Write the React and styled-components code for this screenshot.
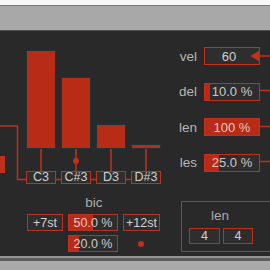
import React from 'react';
import styled, { createGlobalStyle } from 'styled-components';

const RED = '#c0311d';
const BAR = '#b72b17';
const PANEL = '#292929';
const BOX = '#2e2e2e';

const GlobalStyle = createGlobalStyle`
  html, body {
    margin: 0;
    padding: 0;
    width: 270px;
    height: 270px;
    overflow: hidden;
    background: #f6f6f6;
  }
  * {
    box-sizing: border-box;
  }
`;

const bars = [
  { note: 'C3', height: 99 },
  { note: 'C#3', height: 72 },
  { note: 'D3', height: 25 },
  { note: 'D#3', height: 5 },
];

const params = [
  { label: 'vel', value: '60', kind: 'number' },
  { label: 'del', value: '10.0 %', fill: 10 },
  { label: 'len', value: '100 %', fill: 100 },
  { label: 'les', value: '25.0 %', fill: 25 },
];

const App = () => {
  return (
    <Page>
      <GlobalStyle />
      <TopStrip />
      <Toolbar />
      <Panel>
        <Wires width="270" height="225" viewBox="0 0 270 225">
          <polyline points="0,95 17.5,95 17.5,148.5 26,148.5" />
          <line x1="56" y1="148.5" x2="61" y2="148.5" />
          <line x1="91" y1="148.5" x2="96" y2="148.5" />
          <line x1="126" y1="148.5" x2="131" y2="148.5" />
          {[41, 76, 111, 146].map((x) => (
            <line key={x} x1={x} y1="118" x2={x} y2="140" />
          ))}
          <circle cx="76" cy="130" r="3" />
          {[25, 59.5, 95.5, 130.5].map((y) => (
            <line key={y} x1="260" y1={y} x2="270" y2={y} />
          ))}
          <rect className="solid" x="0" y="125" width="5" height="17" />
        </Wires>

        <LeftArea>
          <Chart>
            {bars.map((b) => (
              <Bar key={b.note} $height={b.height} />
            ))}
          </Chart>
          <NoteRow>
            {bars.map((b) => (
              <NoteBox key={b.note}>{b.note}</NoteBox>
            ))}
          </NoteRow>
          <GroupLabel>bic</GroupLabel>
          <ControlRow>
            <Box $width={36}>+7st</Box>
            <Slider $width={50} $fill={50}>50.0 %</Slider>
            <Box $width={37}>+12st</Box>
          </ControlRow>
          <ControlRow $indent={41}>
            <Slider $width={50} $fill={20}>20.0 %</Slider>
            <Led />
          </ControlRow>
        </LeftArea>

        <RightArea>
          <ParamList>
            {params.map((p) => (
              <ParamRow key={p.label}>
                <ParamLabel>{p.label}</ParamLabel>
                {p.kind === 'number' ? (
                  <NumberBox>{p.value}</NumberBox>
                ) : (
                  <ParamSlider $fill={p.fill}>{p.value}</ParamSlider>
                )}
              </ParamRow>
            ))}
          </ParamList>
          <LenGroup>
            <GroupLabel as="div">len</GroupLabel>
            <LenRow>
              <Box $width={31} $height={16}>4</Box>
              <Box $width={30} $height={16}>4</Box>
            </LenRow>
          </LenGroup>
        </RightArea>
      </Panel>
      <Footer />
    </Page>
  );
};

export default App;

const Page = styled.div`
  display: flex;
  flex-direction: column;
  width: 270px;
  height: 270px;
  font-family: 'Liberation Sans', Arial, sans-serif;
`;

const TopStrip = styled.div`
  height: 5px;
  background: #f7f7f7;
`;

const Toolbar = styled.div`
  height: 26px;
  background: #a8a8a8;
  border-top: 1px solid #777777;
  border-bottom: 1px solid #4c4c4c;
`;

const Panel = styled.div`
  position: relative;
  display: flex;
  height: 225px;
  background: ${PANEL};
`;

const Footer = styled.div`
  flex: 1;
  background: #a9a9a9;
  border-top: 2px solid #959595;
  box-shadow: inset 0 3px 0 #5e5e5e;
`;

const Wires = styled.svg`
  position: absolute;
  left: 0;
  top: 0;
  pointer-events: none;
  stroke: ${RED};
  stroke-width: 1.5;
  fill: none;
  circle,
  .solid {
    fill: ${RED};
    stroke: none;
  }
`;

const LeftArea = styled.div`
  position: relative;
  display: flex;
  flex-direction: column;
  width: 172px;
`;

const Chart = styled.div`
  display: flex;
  align-items: flex-end;
  gap: 5px;
  height: 118px;
  padding-left: 26px;
`;

const Bar = styled.div`
  width: 30px;
  height: ${({ $height }) => $height}px;
  background: ${BAR};
  border: 1px solid #1f3434;
`;

const NoteRow = styled.div`
  display: flex;
  gap: 5px;
  margin-top: 22px;
  padding-left: 26px;
`;

const Box = styled.div`
  display: flex;
  align-items: center;
  justify-content: center;
  width: ${({ $width }) => $width || 30}px;
  height: ${({ $height }) => $height || 17}px;
  border: 1px solid ${RED};
  background: ${BOX};
  color: #d0d0d0;
  font-size: 12.5px;
  white-space: nowrap;
`;

const NoteBox = styled(Box)`
  width: 30px;
  height: 13px;
  font-size: 12.5px;
  line-height: 11px;
`;

const Slider = styled(Box)`
  background: linear-gradient(
    to right,
    ${BAR} 0 ${({ $fill }) => $fill}%,
    ${BOX} ${({ $fill }) => $fill}% 100%
  );
  color: rgba(240, 240, 240, 0.8);
`;

const GroupLabel = styled.span`
  display: block;
  margin-top: 12px;
  text-align: center;
  width: 188px;
  font-size: 13.5px;
  line-height: 14px;
  color: #ababab;
`;

const ControlRow = styled.div`
  display: flex;
  align-items: center;
  gap: 5px;
  margin-top: 4px;
  padding-left: ${({ $indent }) => 27 + ($indent || 0)}px;
`;

const Led = styled.span`
  width: 6px;
  height: 6px;
  margin-left: 15px;
  border-radius: 50%;
  background: ${RED};
`;

const RightArea = styled.div`
  position: relative;
  display: flex;
  flex-direction: column;
  width: 98px;
`;

const ParamList = styled.div`
  display: flex;
  flex-direction: column;
  gap: 17.5px;
  margin-top: 16px;
`;

const ParamRow = styled.div`
  display: flex;
  align-items: center;
  justify-content: flex-end;
  gap: 7px;
  padding-right: 10px;
`;

const ParamLabel = styled.span`
  font-size: 13.5px;
  color: #b6b6b6;
`;

const NumberBox = styled(Box)`
  position: relative;
  width: 56px;
  height: 18px;
  padding-right: 6px;
  font-size: 13px;
  &::after {
    content: '';
    position: absolute;
    right: 0;
    top: 3px;
    border-top: 5px solid transparent;
    border-bottom: 5px solid transparent;
    border-right: 9px solid ${RED};
  }
`;

const ParamSlider = styled(Slider)`
  width: 56px;
  height: 18px;
  font-size: 13px;
`;

const LenGroup = styled.div`
  display: flex;
  flex-direction: column;
  margin-top: 29px;
  margin-left: 9px;
  width: 100px;
  height: 51px;
  border: 1px solid ${RED};
  padding: 7px 0 0 7px;

  ${GroupLabel} {
    margin-top: 0;
    width: 62px;
  }
`;

const LenRow = styled.div`
  display: flex;
  gap: 3px;
  margin-top: 5px;
`;
